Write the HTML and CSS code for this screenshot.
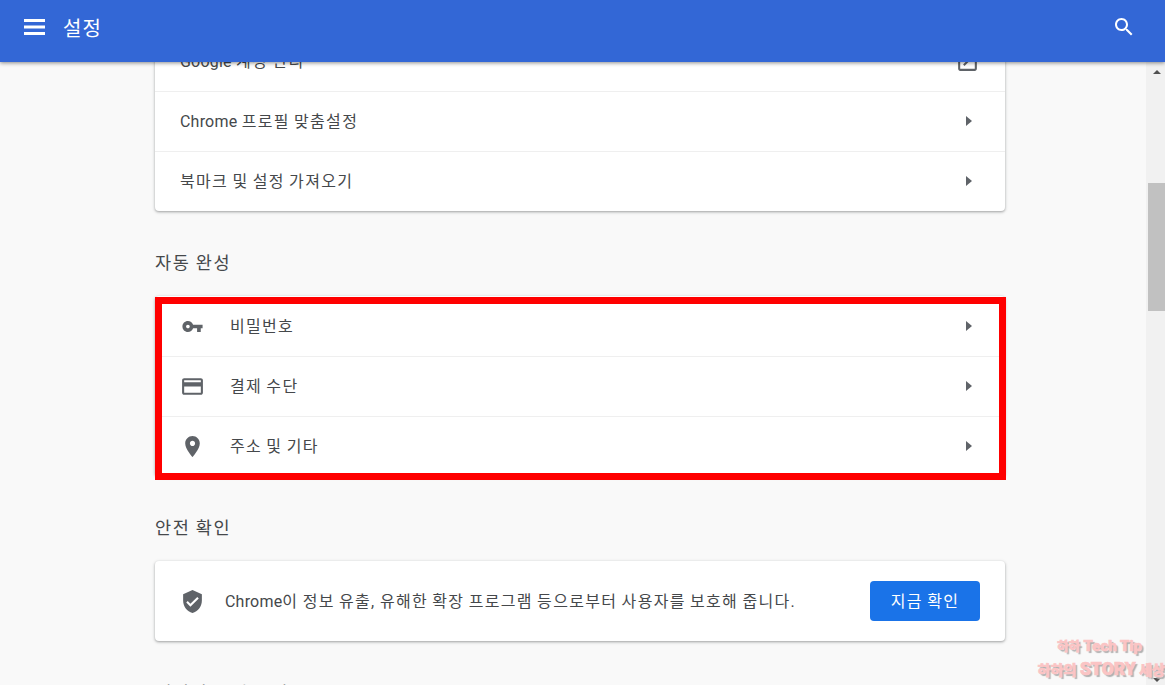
FILE: index.html
```html
<!DOCTYPE html>
<html lang="ko">
<head>
<meta charset="utf-8">
<title>설정</title>
<link rel="stylesheet" href="styles.css">
</head>
<body>
<header class="topbar">
  <svg class="menu-icon" viewBox="0 0 21 16"><path d="M0 0h21v3H0zM0 6.5h21v3H0zM0 13h21v3H0z"/></svg>
  <h1 class="title">설정</h1>
  <svg class="icon search-icon" viewBox="0 0 24 24"><path d="M15.5 14h-.79l-.28-.27C15.41 12.59 16 11.11 16 9.5 16 5.91 13.09 3 9.5 3S3 5.91 3 9.5 5.91 16 9.5 16c1.61 0 3.09-.59 4.23-1.57l.27.28v.79l5 4.99L20.49 19l-4.99-5zm-6 0C7.01 14 5 11.99 5 9.5S7.01 5 9.5 5 14 7.01 14 9.5 11.99 14 9.5 14z"/></svg>
</header>
<div class="viewport">
  <main class="content">
    <section class="card">
      <div class="row"><span class="label"><span class="latin">Google</span> 계정 관리</span><svg class="icon row-end" viewBox="0 0 24 24"><path d="M19 19H5V5h7V3H5c-1.11 0-2 .9-2 2v14c0 1.1.89 2 2 2h14c1.1 0 2-.89 2-2v-7h-2v7zM14 3v2h3.59l-9.83 9.83 1.41 1.41L19 6.41V10h2V3h-7z"/></svg></div>
      <div class="row"><span class="label"><span class="latin">Chrome</span> 프로필 맞춤설정</span><span class="arrow"></span></div>
      <div class="row"><span class="label">북마크 및 설정 가져오기</span><span class="arrow"></span></div>
    </section>

    <h2 class="heading">자동 완성</h2>
    <section class="card card-marked">
      <div class="row">
        <svg class="icon row-icon key" viewBox="0 0 24 24"><path d="M12.65 10C11.83 7.67 9.61 6 7 6c-3.31 0-6 2.69-6 6s2.69 6 6 6c2.61 0 4.83-1.67 5.65-4H17v4h4v-4h2v-4H12.65zM7 14c-1.1 0-2-.9-2-2s.9-2 2-2 2 .9 2 2-.9 2-2 2z"/></svg>
        <span class="label">비밀번호</span><span class="arrow"></span>
      </div>
      <div class="row">
        <svg class="icon row-icon" viewBox="0 0 24 24"><path d="M20 4H4c-1.11 0-1.99.89-1.99 2L2 18c0 1.11.89 2 2 2h16c1.11 0 2-.89 2-2V6c0-1.11-.89-2-2-2zm0 14H4v-6h16v6zm0-10H4V6h16v2z"/></svg>
        <span class="label">결제 수단</span><span class="arrow"></span>
      </div>
      <div class="row">
        <svg class="icon row-icon" viewBox="0 0 24 24"><path d="M12 2C8.13 2 5 5.13 5 9c0 5.25 7 13 7 13s7-7.75 7-13c0-3.87-3.13-7-7-7zm0 9.5c-1.38 0-2.5-1.12-2.5-2.5s1.12-2.5 2.5-2.5 2.5 1.12 2.5 2.5-1.12 2.5-2.5 2.5z"/></svg>
        <span class="label">주소 및 기타</span><span class="arrow"></span>
      </div>
      <div class="red-box"></div>
    </section>

    <h2 class="heading">안전 확인</h2>
    <section class="card">
      <div class="row row-tall">
        <svg class="icon row-icon shield" viewBox="0 0 24 24"><path d="M12 1L3 5v6c0 5.55 3.84 10.74 9 12 5.16-1.26 9-6.45 9-12V5l-9-4zm-2 16l-4-4 1.41-1.41L10 14.17l6.59-6.59L18 9l-8 8z"/></svg>
        <span class="label"><span class="latin">Chrome</span>이 정보 유출, 유해한 확장 프로그램 등으로부터 사용자를 보호해 줍니다.</span>
        <button class="primary" type="button">지금 확인</button>
      </div>
    </section>

    <h2 class="heading">개인정보 및 보안</h2>
  </main>
  <aside class="scrollbar">
    <span class="sb-up"></span>
    <span class="sb-thumb"></span>
    <span class="sb-down"></span>
  </aside>
  <div class="watermark">
    <span class="wm-line wm-first">하하 <span class="wm-tech">Tech Tip</span></span>
    <span class="wm-line wm-second">하하의 <span class="wm-story">STORY</span> 세상</span>
  </div>
</div>
</body>
</html>
```
FILE: styles.css
```css
* { box-sizing: border-box; }
html, body { height: 100%; margin: 0; }
body {
  display: flex;
  flex-direction: column;
  overflow: hidden;
  background: #f9f9f9;
  color: #45484b;
  font-family: Roboto, "Noto Sans CJK KR", sans-serif;
}
.icon { display: block; fill: #5f6368; flex: none; }

.topbar {
  position: relative;
  z-index: 2;
  display: flex;
  align-items: center;
  flex: none;
  height: 62px;
  padding: 0 29px 8px 24px;
  background: #3367d6;
  box-shadow: 0 1px 4px rgba(0, 0, 0, .45);
}
.menu-icon { display: block; flex: none; width: 21px; height: 16px; fill: #fff; }
.title {
  margin: 0 0 0 18px;
  color: #fff;
  font-size: 20px;
  font-weight: 400;
  letter-spacing: 1px;
}
.search-icon { width: 24px; height: 24px; margin-left: auto; fill: #fff; }

.viewport {
  position: relative;
  display: flex;
  flex: 1;
  min-height: 0;
  overflow: hidden;
}
.content {
  flex: 1;
  min-width: 0;
  margin-top: -31px;
  padding: 0 142px 0 155px;
}
.card {
  position: relative;
  width: 850px;
  background: #fff;
  border-radius: 4px;
  box-shadow: 0 1px 2px rgba(60, 64, 67, .3), 0 1px 3px 1px rgba(60, 64, 67, .15);
}
.row {
  display: flex;
  align-items: center;
  height: 60px;
  padding: 0 25px;
  font-size: 16px;
}
.row + .row { box-shadow: inset 0 1px 0 #efefef; }
.row-tall { height: 80px; }
.label {
  flex: 1;
  min-width: 0;
  padding-bottom: 2px;
  letter-spacing: 1.32px;
  word-spacing: -1px;
}
.latin { letter-spacing: .2px; }
.row-end { width: 25px; height: 25px; }
.row-icon { width: 25px; height: 25px; margin-right: 25px; }
.key { transform: scale(.88); }
.shield { margin-right: 20px; }
.arrow {
  flex: none;
  width: 0;
  height: 0;
  margin-right: 8px;
  border-left: 6px solid #5f6368;
  border-top: 5px solid transparent;
  border-bottom: 5px solid transparent;
}
.heading {
  height: 85px;
  margin: 0;
  padding-top: 39px;
  color: #45484b;
  font-size: 17.5px;
  font-weight: 400;
  line-height: 26px;
  letter-spacing: 1.7px;
  word-spacing: -1px;
}
.primary {
  flex: none;
  width: 110px;
  height: 40px;
  padding: 0 0 2px;
  border: 0;
  border-radius: 4px;
  background: #1a73e8;
  color: #fff;
  font: inherit;
  font-size: 16px;
  letter-spacing: 1.32px;
  word-spacing: -1px;
}

.red-box {
  position: absolute;
  top: 1px;
  left: 0;
  width: 851px;
  height: 183px;
  border: 7px solid #f00;
}

.scrollbar {
  position: relative;
  display: flex;
  flex: none;
  flex-direction: column;
  align-items: flex-end;
  width: 19px;
  background: #f1f1f1;
}
.sb-up, .sb-down {
  position: absolute;
  right: 4px;
  width: 0;
  height: 0;
  border-left: 4px solid transparent;
  border-right: 4px solid transparent;
}
.sb-up { top: 8px; border-bottom: 4px solid #505050; }
.sb-down { bottom: 3px; border-top: 4px solid #505050; }
.sb-thumb {
  width: 17px;
  height: 128px;
  margin-top: 121px;
  background: #c1c1c1;
}

.watermark {
  position: absolute;
  right: 0;
  bottom: 4px;
  display: flex;
  flex-direction: column;
  align-items: flex-end;
  color: #fbc4c4;
  font-size: 12.5px;
  font-weight: 900;
  line-height: 22px;
  -webkit-text-stroke: .6px #fbc4c4;
  text-shadow: 2px 2px 1px #b0b0b0;
}
.wm-line { white-space: nowrap; }
.wm-first { margin-right: 23px; }
.wm-second { font-size: 14px; }
.wm-tech { font-size: 15px; }
.wm-story { font-size: 17.5px; }
```
